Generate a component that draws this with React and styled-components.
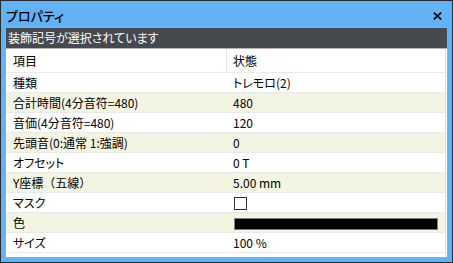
import React from "react";
import styled, { createGlobalStyle } from "styled-components";

const GlobalStyle = createGlobalStyle`
  html, body { margin: 0; padding: 0; background: #ffffff; }
  body {
    font-family: "Noto Sans CJK JP", "Noto Sans", sans-serif;
    font-feature-settings: "palt";
  }
  * { box-sizing: border-box; }
`;

const Window = styled.div`
  width: 453px;
  height: 263px;
  border: 1px solid #2b2b2b;
  background: #62b3f5;
  display: flex;
  flex-direction: column;
  padding: 0 4px 4px 4px;
`;

const TitleBar = styled.div`
  height: 26px;
  flex: none;
  display: flex;
  align-items: center;
  justify-content: space-between;
  padding: 2px 6px 0 1px;
`;

const Title = styled.div`
  font-size: 13px;
  font-weight: 500;
  color: #000;
  line-height: 1;
`;

const CloseButton = styled.div`
  width: 10px;
  height: 10px;
  display: flex;
  align-items: center;
  justify-content: center;
  margin-top: 1px;
`;

const Body = styled.div`
  flex: 1;
  min-height: 0;
  display: flex;
  flex-direction: column;
  background: #ffffff;
  border: 1px solid #a9a9a9;
`;

const SelectionBar = styled.div`
  height: 21px;
  flex: none;
  background: #464a4e;
  border-bottom: 1px solid #b4b4b4;
  color: #ffffff;
  font-size: 12px;
  line-height: 20px;
  padding-left: 2px;
`;

const Table = styled.div`
  flex: 1;
  width: 440px;
  border-right: 1px solid #dedede;
  display: flex;
  flex-direction: column;
`;

const Row = styled.div`
  height: ${(p) => (p.$header ? 24 : 20)}px;
  flex: none;
  display: grid;
  grid-template-columns: 221px 1fr;
  background: ${(p) => (p.$alt ? "#f4f4e2" : "#ffffff")};
  border-bottom: 1px solid #e9e9e9;
`;

const Cell = styled.div`
  display: flex;
  align-items: center;
  padding-left: ${(p) => (p.$value ? 6 : 7)}px;
  font-size: 12px;
  color: #000;
  white-space: nowrap;
  border-right: ${(p) => (p.$divider ? "1px solid #e2e2e2" : "none")};
  font-feature-settings: ${(p) => (p.$fullwidth ? "normal" : "\"palt\"")};
`;

const Checkbox = styled.span`
  width: 13px;
  height: 13px;
  border: 1px solid #333333;
  background: #fff;
  margin-left: 1px;
  margin-top: 1px;
`;

const ColorBar = styled.span`
  width: 204px;
  height: 12px;
  background: ${(p) => p.$color};
  border: 1px solid #808080;
  margin-left: 1px;
  margin-top: 2px;
`;

const rows = [
  ["種類", "トレモロ(2)"],
  ["合計時間(4分音符=480)", "480"],
  ["音価(4分音符=480)", "120"],
  ["先頭音(0:通常 1:強調)", "0"],
  ["オフセット", "0 T"],
  ["Y座標（五線）", "5.00 mm", true],
  ["マスク", { type: "check" }],
  ["色", { type: "color", color: "#000000" }],
  ["サイズ", "100 %"],
];

function Value({ v }) {
  if (typeof v === "string") return v;
  if (v.type === "check") return <Checkbox />;
  if (v.type === "color") return <ColorBar $color={v.color} />;
  return null;
}

export default function App() {
  return (
    <>
      <GlobalStyle />
      <Window>
        <TitleBar>
          <Title>プロパティ</Title>
          <CloseButton>
            <svg width="9" height="8" viewBox="0 0 9 8">
              <path d="M0.8 0.6 L8.2 7.4 M8.2 0.6 L0.8 7.4" stroke="#000" strokeWidth="1.7" fill="none" />
            </svg>
          </CloseButton>
        </TitleBar>
        <Body>
          <SelectionBar>装飾記号が選択されています</SelectionBar>
          <Table>
            <Row $header>
              <Cell $divider>項目</Cell>
              <Cell $value>状態</Cell>
            </Row>
            {rows.map(([k, v, full], i) => (
              <Row key={k} $alt={i % 2 === 1}>
                <Cell $fullwidth={full}>{k}</Cell>
                <Cell $value>
                  <Value v={v} />
                </Cell>
              </Row>
            ))}
          </Table>
        </Body>
      </Window>
    </>
  );
}
